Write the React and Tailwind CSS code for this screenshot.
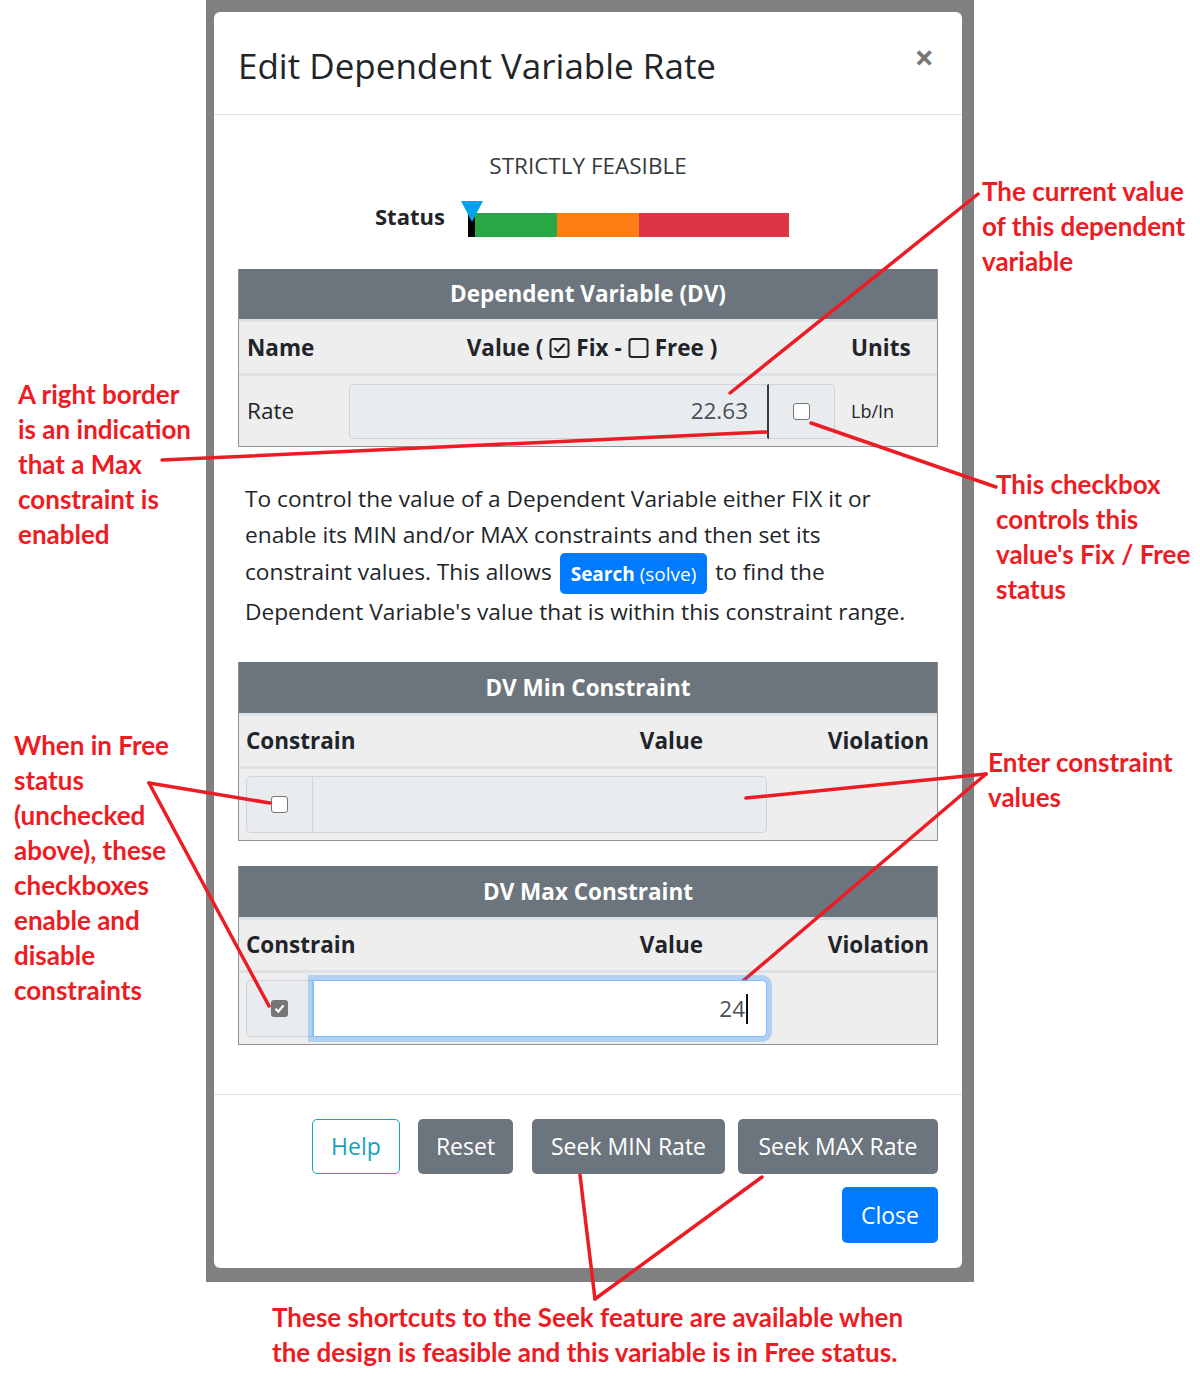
import React from "react";

const RED = "#ed1c24";

function BoxIcon({ checked }) {
  return (
    <svg width="21" height="22" viewBox="0 0 21 22" className="inline-block">
      <rect x="1.5" y="2" width="18" height="18" rx="2.5" fill="none" stroke="#212529" strokeWidth="2" />
      {checked && <path d="M5.5 11 L9 14.5 L15.5 7" fill="none" stroke="#212529" strokeWidth="2" />}
    </svg>
  );
}

function Checkbox({ checked }) {
  if (checked) {
    return (
      <span className="w-[17px] h-[17px] rounded-[3px] bg-[#767676] flex items-center justify-center">
        <svg width="13" height="13" viewBox="0 0 13 13">
          <path d="M2.5 6.8 L5.3 9.6 L10.5 3.4" fill="none" stroke="white" strokeWidth="2.2" />
        </svg>
      </span>
    );
  }
  return <span className="w-[17px] h-[17px] rounded-[3px] bg-white border border-[#767676] block" />;
}

function DvTable() {
  return (
    <div className="border-x border-b border-[#8e9297]">
      <div className="h-[50px] bg-[#6c757d] flex items-center justify-center text-white font-bold text-[22.5px]">
        Dependent Variable (DV)
      </div>
      <div className="h-[3px] bg-[#dee2e6]" />
      <div className="h-[51px] bg-[#eeeeee] flex items-center font-bold text-[22.5px] text-[#212529]">
        <div className="w-[110px] pl-[8px]">Name</div>
        <div className="w-[486px] flex items-center justify-center gap-[6px]">
          <span>Value (</span>
          <BoxIcon checked />
          <span>Fix -</span>
          <BoxIcon />
          <span>Free )</span>
        </div>
        <div className="pl-[16px]">Units</div>
      </div>
      <div className="h-[3px] bg-[#dee2e6]" />
      <div className="h-[70px] bg-[#eeeeee] flex items-center text-[22.5px] text-[#212529]">
        <div className="w-[110px] pl-[8px]">Rate</div>
        <div className="w-[486px] h-[55px] flex">
          <div className="flex-1 bg-[#e9ecef] border border-[#ced4da] border-r-[2px] border-r-[#343a40] rounded-l-[5px] flex items-center justify-end pr-[19px] text-[#495057]">
            22.63
          </div>
          <div className="w-[66px] bg-[#e9ecef] border border-l-0 border-[#ced4da] rounded-r-[5px] flex items-center justify-center">
            <Checkbox />
          </div>
        </div>
        <div className="pl-[16px] text-[18px]">Lb/In</div>
      </div>
    </div>
  );
}

function ConstraintTable({ title, checked, value }) {
  return (
    <div className="border-x border-b border-[#8e9297]">
      <div className="h-[51px] bg-[#6c757d] flex items-center justify-center text-white font-bold text-[22.5px]">
        {title}
      </div>
      <div className="h-[3px] bg-[#dee2e6]" />
      <div className="h-[50px] bg-[#eeeeee] flex items-center font-bold text-[22.5px] text-[#212529]">
        <div className="flex-1 pl-[7px]">Constrain</div>
        <div className="pr-[64px]">Value</div>
        <div className="w-[170px] text-right pr-[8px]">Violation</div>
      </div>
      <div className="h-[3px] bg-[#dee2e6]" />
      <div className="h-[71px] bg-[#eeeeee] flex items-center pl-[7px] text-[22.5px]">
        <div className="w-[521px] h-[57px] flex">
          <div className="w-[67px] bg-[#e9ecef] border border-[#ced4da] rounded-l-[5px] flex items-center justify-center">
            <Checkbox checked={checked} />
          </div>
          {checked ? (
            <div className="relative z-10 flex-1 bg-white border border-[#80bdff] rounded-r-[5px] shadow-[0_0_0_5px_rgba(0,123,255,0.25)] flex items-center justify-end pr-[18px] text-[#495057]">
              {value}
              <span className="w-[2px] h-[30px] bg-[#111] ml-[1px]" />
            </div>
          ) : (
            <div className="flex-1 bg-[#e9ecef] border border-l-0 border-[#ced4da] rounded-r-[5px]" />
          )}
        </div>
      </div>
    </div>
  );
}

function StatusBar() {
  return (
    <div className="flex items-center ml-[137px] mt-[19px] h-[36px]">
      <span className="font-bold text-[22px] text-[#212529] w-[86px] pb-[6px]">Status</span>
      <div className="relative w-[328px] h-[36px] flex items-end">
        <div className="w-[7px] ml-[7px] h-[24px] bg-black" />
        <div className="w-[82px] h-[24px] bg-[#28a745]" />
        <div className="w-[83px] h-[24px] bg-[#fd7e14]" />
        <div className="w-[150px] h-[24px] bg-[#dc3545]" />
        <svg className="absolute left-0 top-0" width="22" height="22" viewBox="0 0 22 22">
          <polygon points="0,0 22,0 11,21" fill="#00a3e8" />
        </svg>
      </div>
    </div>
  );
}

function Modal() {
  return (
    <div className="w-[748px] h-[1256px] bg-white rounded-[6px] flex flex-col [font-family:'Open_Sans',sans-serif] text-[#212529]">
      <div className="h-[103px] border-b border-[#dee2e6] px-6 flex items-center justify-between">
        <h1 className="text-[35px] leading-none pt-[4px] text-[#212529]">Edit Dependent Variable Rate</h1>
        <span className="text-[34px] font-bold leading-none text-[#777] mr-[4px] -mt-[12px]">×</span>
      </div>
      <div className="flex-1 px-6 pt-[35px]">
        <div className="h-[32px] leading-[32px] text-center text-[22.5px] text-[#343a40]">STRICTLY FEASIBLE</div>
        <StatusBar />
        <div className="mt-[32px]">
          <DvTable />
        </div>
        <p className="mt-[34px] px-[7px] text-[22.7px] leading-[36px]">
          To control the value of a Dependent Variable either FIX it or
          <br />
          enable its MIN and/or MAX constraints and then set its
          <br />
          constraint values. This allows{" "}
          <span className="inline-flex items-center align-middle h-[41px] px-[11px] mx-[2px] bg-[#007bff] rounded-[5px] text-white text-[19px]">
            <b>Search</b>&nbsp;(solve)
          </span>{" "}
          to find the
          <br />
          Dependent Variable's value that is within this constraint range.
        </p>
        <div className="mt-[32px]">
          <ConstraintTable title="DV Min Constraint" />
        </div>
        <div className="mt-[25px]">
          <ConstraintTable title="DV Max Constraint" checked value="24" />
        </div>
      </div>
      <div className="border-t border-[#dee2e6] px-6 pt-[24px] pb-[25px] flex flex-col items-end gap-[13px] text-[23px]">
        <div className="flex">
          <button className="w-[88px] h-[55px] border border-[#17a2b8] text-[#17a2b8] rounded-[5px]">Help</button>
          <button className="ml-[18px] w-[95px] h-[55px] bg-[#6c757d] text-white rounded-[5px]">Reset</button>
          <button className="ml-[19px] w-[193px] h-[55px] bg-[#6c757d] text-white rounded-[5px]">Seek MIN Rate</button>
          <button className="ml-[13px] w-[200px] h-[55px] bg-[#6c757d] text-white rounded-[5px]">Seek MAX Rate</button>
        </div>
        <button className="w-[96px] h-[56px] bg-[#007bff] text-white rounded-[5px]">Close</button>
      </div>
    </div>
  );
}

function Note({ children, className }) {
  return (
    <div className={`text-[26px] leading-[35px] font-bold text-[#ed1c24] whitespace-nowrap ${className}`}>
      {children}
    </div>
  );
}

function Arrows() {
  const lines = [
    [978, 194, 730, 393],
    [162, 460, 766, 432],
    [811, 423, 996, 487],
    [149, 783, 270, 803],
    [149, 783, 269, 1006],
    [986, 774, 746, 798],
    [986, 774, 737, 986],
    [580, 1175, 595, 1299],
    [762, 1177, 595, 1299],
  ];
  return (
    <svg className="absolute inset-0 pointer-events-none" width="1200" height="1400">
      {lines.map(([x1, y1, x2, y2], i) => (
        <line key={i} x1={x1} y1={y1} x2={x2} y2={y2} stroke={RED} strokeWidth="3.5" strokeLinecap="round" />
      ))}
    </svg>
  );
}

export default function App() {
  return (
    <div className="relative w-[1200px] h-[1400px] bg-white overflow-hidden [font-family:Lato,sans-serif]">
      <div className="flex">
        <div className="w-[206px] shrink-0">
          <Note className="pt-[377px] pl-[18px]">
            A right border
            <br />
            is an indication
            <br />
            that a Max
            <br />
            constraint is
            <br />
            enabled
          </Note>
          <Note className="mt-[176px] pl-[14px]">
            When in Free
            <br />
            status
            <br />
            (unchecked
            <br />
            above), these
            <br />
            checkboxes
            <br />
            enable and
            <br />
            disable
            <br />
            constraints
          </Note>
        </div>
        <div className="w-[768px] h-[1282px] shrink-0 bg-[#808080] pt-[12px] pl-[8px]">
          <Modal />
        </div>
        <div className="flex-1">
          <Note className="pt-[174px] pl-[8px]">
            The current value
            <br />
            of this dependent
            <br />
            variable
          </Note>
          <Note className="mt-[188px] pl-[22px]">
            This checkbox
            <br />
            controls this
            <br />
            value's Fix / Free
            <br />
            status
          </Note>
          <Note className="mt-[138px] pl-[14px]">
            Enter constraint
            <br />
            values
          </Note>
        </div>
      </div>
      <Note className="mt-[18px] pl-[272px]">
        These shortcuts to the Seek feature are available when
        <br />
        the design is feasible and this variable is in Free status.
      </Note>
      <Arrows />
    </div>
  );
}
